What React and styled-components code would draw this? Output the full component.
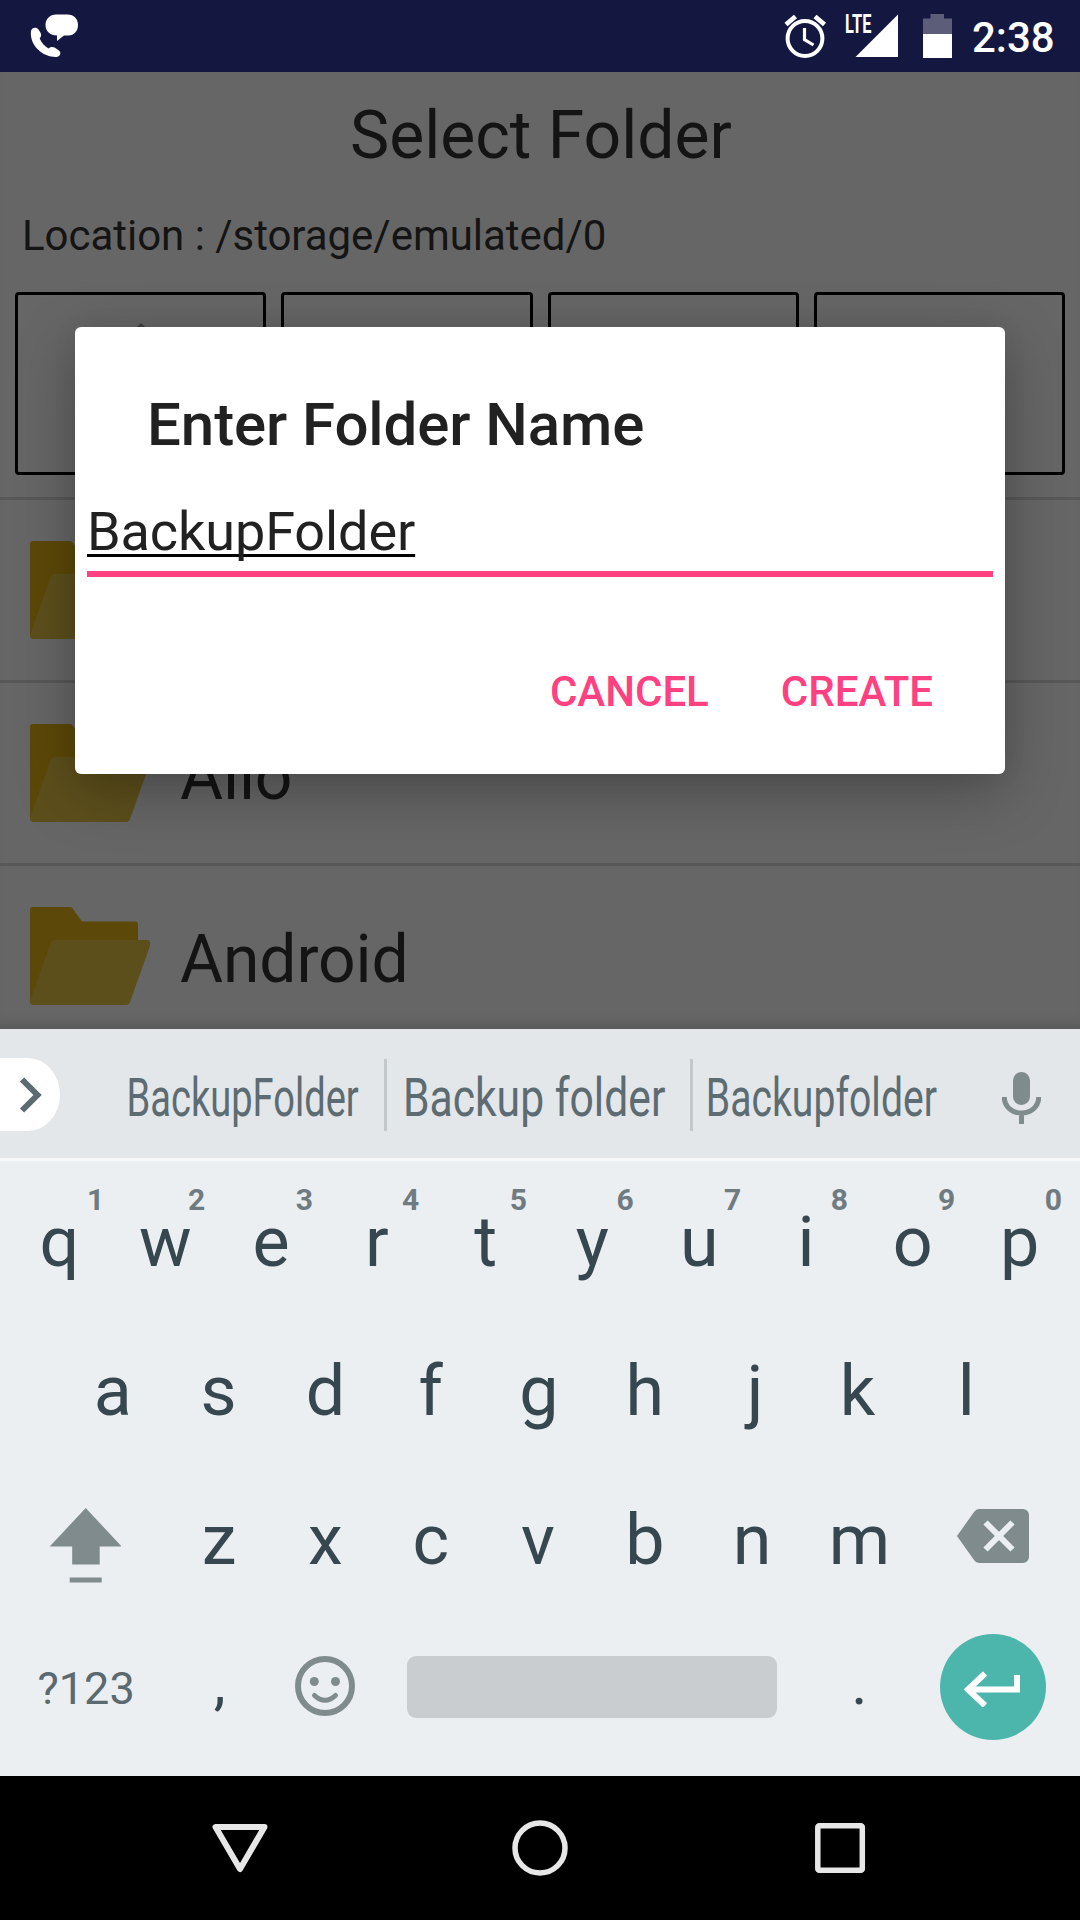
import React from "react";
import styled, { createGlobalStyle } from "styled-components";

const GlobalStyle = createGlobalStyle`
  body { margin: 0; background: #000; }
  * { box-sizing: border-box; }
`;

const Screen = styled.div`
  position: relative;
  display: flex;
  flex-direction: column;
  width: 1080px;
  height: 1920px;
  overflow: hidden;
  background: #666;
  font-family: Roboto, "Noto Sans", sans-serif;
`;

const StatusBar = styled.header`
  flex: none;
  display: flex;
  align-items: flex-start;
  justify-content: space-between;
  height: 72px;
  padding: 14px 25px 0 30px;
  background: #141840;
  color: #fff;
`;

const StatusIcons = styled.div`
  display: flex;
  align-items: flex-start;
`;

const Signal = styled.div`
  position: relative;
  width: 54px;
  height: 44px;
  margin-left: 18px;
`;

const NetworkLabel = styled.span`
  position: absolute;
  left: 0;
  top: 0;
  font-size: 26px;
  font-weight: 700;
  line-height: 20px;
  transform: scaleX(0.63);
  transform-origin: left;
`;

const BatteryIcon = styled.svg`
  margin-left: 24px;
`;

const Clock = styled.span`
  margin-left: 20px;
  width: 83px;
  font-size: 42px;
  font-weight: 500;
  line-height: 47px;
  white-space: nowrap;
`;

const Picker = styled.main`
  flex: none;
  display: flex;
  flex-direction: column;
  height: 957px;
  overflow: hidden;
  color: #141414;
`;

const PickerTitle = styled.h1`
  flex: none;
  margin: 0;
  padding-left: 2px;
  font-size: 66px;
  font-weight: 400;
  line-height: 127px;
  text-align: center;
`;

const Location = styled.div`
  flex: none;
  padding-left: 22px;
  font-size: 42px;
  letter-spacing: -0.03px;
  line-height: 73px;
`;

const ToolGrid = styled.div`
  flex: none;
  display: grid;
  grid-template-columns: repeat(4, 1fr);
  gap: 15px;
  padding: 20px 15px 22px;
`;

const ToolButton = styled.div`
  display: flex;
  justify-content: center;
  height: 183px;
  padding-top: 28px;
  border: 3px solid #000;
  border-radius: 4px;
`;

const FolderRow = styled.div`
  flex: none;
  display: flex;
  align-items: center;
  gap: 30px;
  height: 183px;
  padding-left: 30px;
  border-top: 3px solid #585858;
`;

const FolderName = styled.span`
  padding-top: 8px;
  font-size: 66px;
  letter-spacing: -0.1px;
  line-height: 76px;
`;

const Overlay = styled.div`
  position: absolute;
  left: 0;
  top: 72px;
  width: 1080px;
  height: 957px;
  display: flex;
  align-items: center;
  justify-content: center;
  overflow: hidden;
  box-shadow: inset 0 -14px 14px -12px rgba(0, 0, 0, 0.2);
`;

const Dialog = styled.section`
  display: flex;
  flex-direction: column;
  width: 930px;
  height: 447px;
  padding-top: 62px;
  border-radius: 6px;
  background: #fff;
  color: #212121;
  box-shadow: 0 18px 60px rgba(0, 0, 0, 0.27), 0 0 26px rgba(0, 0, 0, 0.06);
`;

const DialogTitle = styled.h2`
  margin: 0;
  padding-left: 72px;
  font-size: 60px;
  font-weight: 500;
  letter-spacing: -0.08px;
  line-height: 71px;
`;

const Field = styled.div`
  height: 78px;
  margin: 39px 12px 0;
  border-bottom: 6px solid #ff4081;
  font-size: 54px;
  letter-spacing: -0.1px;
  line-height: 65px;
`;

const Composing = styled.span`
  text-decoration: underline;
  text-decoration-color: #000;
  text-decoration-thickness: 3px;
  text-decoration-skip-ink: none;
  text-underline-offset: 4px;
`;

const DialogActions = styled.div`
  display: flex;
  justify-content: flex-end;
  gap: 72px;
  margin-top: 82px;
  padding-right: 72px;
`;

const DialogButton = styled.span`
  color: #ff4081;
  font-size: 42px;
  font-weight: 500;
  line-height: 66px;
`;

const Keyboard = styled.section`
  flex: none;
  display: flex;
  flex-direction: column;
  height: 747px;
  background: #ebeff2;
  color: #37474f;
`;

const SuggestionStrip = styled.div`
  flex: none;
  display: flex;
  align-items: center;
  height: 132px;
  padding-top: 2px;
  border-bottom: 3px solid #f6f8f9;
  background: #e3e7ea;
`;

const ExpandTab = styled.div`
  display: flex;
  align-items: center;
  width: 60px;
  height: 73px;
  margin-right: 42px;
  padding-left: 19px;
  border-radius: 0 32px 32px 0 / 0 36.5px 36.5px 0;
  background: #fff;
`;

const Suggestion = styled.div`
  flex: none;
  display: flex;
  justify-content: center;
  width: ${(p) => p.$width}px;
  padding: 6px ${(p) => p.$inset || 0}px 0 0;
  color: #5d6b72;
  font-size: 54px;
  line-height: 64px;
`;

const Condensed = styled.span`
  white-space: nowrap;
  transform: scaleX(${(p) => p.$scale});
`;

const Separator = styled.div`
  flex: none;
  width: 3px;
  height: 72px;
  background: #c3c8cb;
`;

const MicButton = styled.div`
  display: flex;
  margin: 6px 0 0 49px;
`;

const KeyRows = styled.div`
  display: flex;
  flex-direction: column;
  padding: 6px 7px 0 5px;
`;

const KeyRow = styled.div`
  display: flex;
  justify-content: center;
  height: 149px;
`;

const Key = styled.div`
  position: relative;
  display: flex;
  align-items: center;
  justify-content: center;
  width: ${(p) => 106.8 * (p.$span || 1)}px;
  padding-top: ${(p) => p.$drop || 0}px;
  padding-bottom: ${(p) => p.$lift || 0}px;
  font-size: ${(p) => p.$size || 70}px;
  text-indent: ${(p) => 2 * (p.$nudge || 0)}px;
  color: ${(p) => p.$color || "inherit"};
`;

const Hint = styled.sup`
  position: absolute;
  top: 15px;
  right: ${(p) => p.$right}px;
  color: #6f7b80;
  font-size: 30px;
  font-weight: 700;
  line-height: 35px;
  text-indent: 0;
`;

const SpaceBar = styled.div`
  width: 370px;
  height: 62px;
  border-radius: 9px;
  background: #c9cdd0;
`;

const EnterKey = styled.div`
  display: flex;
  align-items: center;
  justify-content: center;
  width: 106px;
  height: 106px;
  border-radius: 50%;
  background: #4db6ac;
`;

const NavBar = styled.nav`
  flex: none;
  display: flex;
  align-items: center;
  justify-content: center;
  gap: 240px;
  height: 144px;
  background: #000;
`;

const FolderIcon = () => (
  <svg width="120" height="98" viewBox="0 0 120 98">
    <path
      fill="#5c4808"
      d="M0 3a3 3 0 0 1 3-3H40q2 0 3 2l9 12.600H105q3 0 3 3V50L2 96Q0 96 0 94Z"
    />
    <path
      fill="#5d4f1c"
      d="M25 33H118q2 0 2 3v3L100 95q-1 3-4 3H3q-3 0-3-4L20 38q1-5 5-5Z"
    />
  </svg>
);

const PhoneChatIcon = () => (
  <svg width="49" height="44" viewBox="0 0 49 44" fill="#fff">
    <path d="M26 .5H37.500C44 .5 48 5 48 11s-4 10.500-9.500 10.500H34L27 27V21.500C20 21.500 15.500 17 15.500 11S20 .5 26 .5Z" />
    <path d="M1 17c.5-3.500 5.500-4.500 7.500-1.500l2 3.200c1 2 .8 3.500-.8 5.800 1.800 4.500 4.800 7.500 8.800 10 2.500-2 4.500-1.900 6.500-.8l3.600 2.500c3.400 2.500 1.400 6.300-2 6.800C13 43.500-.8 31.500 1 17Z" />
  </svg>
);

const AlarmIcon = () => (
  <svg width="43" height="46" viewBox="0 0 43 46" fill="none" stroke="#fff">
    <circle cx="21" cy="24.500" r="17.400" strokeWidth="4" />
    <path d="M2 10.500 11.500 2.500M31 2.500 40.500 10.500" strokeWidth="4.800" />
    <path d="M20.500 14V25.500L29.500 31" strokeWidth="3.200" />
  </svg>
);

// Each key: the letter and its optical offset in pixels.
const rows = {
  top: [["q", 1], ["w", 0], ["e", -1], ["r", -2], ["t", 0], ["y", 0], ["u", 0], ["i", 0], ["o", 0], ["p", 0]],
  home: [["a", 1], ["s", 0], ["d", 0], ["f", -1.5], ["g", 0], ["h", -1], ["j", 2.5], ["k", -2], ["l", 0]],
  bottom: [["z", 0.5], ["x", 0], ["c", -1.5], ["v", -1], ["b", -1], ["n", -0.5], ["m", 0]],
};

const hintRight = [7.5, 13.5, 12.5, 13, 12, 12, 11.5, 11.5, 11, 11];

const ICON = "#808b8e";

export default function App() {
  return (
    <Screen>
      <GlobalStyle />
      <StatusBar>
        <PhoneChatIcon />
        <StatusIcons>
          <AlarmIcon />
          <Signal>
            <svg width="54" height="44">
              <path d="M53 .5V43H10.500Z" fill="#fff" />
            </svg>
            <NetworkLabel>LTE</NetworkLabel>
          </Signal>
          <BatteryIcon width="29" height="44">
            <path d="M7.500 0H21V4.500H29V20H0V4.500H7.500Z" fill="#5b5d79" />
            <path d="M0 20H29V44H0Z" fill="#fff" />
          </BatteryIcon>
          <Clock>2:38</Clock>
        </StatusIcons>
      </StatusBar>

      <Picker>
        <PickerTitle>Select Folder</PickerTitle>
        <Location>Location : /storage/emulated/0</Location>
        <ToolGrid>
          <ToolButton>
            <svg width="90" height="90" fill="#3f3f3f">
              <path d="M45 0 85 40H60V90H30V40H5Z" />
            </svg>
          </ToolButton>
          <ToolButton />
          <ToolButton />
          <ToolButton />
        </ToolGrid>
        <FolderRow>
          <FolderIcon />
        </FolderRow>
        <FolderRow>
          <FolderIcon />
          <FolderName>Allo</FolderName>
        </FolderRow>
        <FolderRow>
          <FolderIcon />
          <FolderName>Android</FolderName>
        </FolderRow>
      </Picker>

      <Overlay>
        <Dialog>
          <DialogTitle>Enter Folder Name</DialogTitle>
          <Field>
            <Composing>BackupFolder</Composing>
          </Field>
          <DialogActions>
            <DialogButton>CANCEL</DialogButton>
            <DialogButton>CREATE</DialogButton>
          </DialogActions>
        </Dialog>
      </Overlay>

      <Keyboard>
        <SuggestionStrip>
          <ExpandTab>
            <svg width="24" height="36" fill="none" stroke="#5c6b71" strokeWidth="6">
              <path d="M3 2.500 18.500 18 3 33.500" />
            </svg>
          </ExpandTab>
          <Suggestion $width={282}>
            <Condensed $scale={0.705}>BackupFolder</Condensed>
          </Suggestion>
          <Separator />
          <Suggestion $width={303} $inset={9}>
            <Condensed $scale={0.79}>Backup folder</Condensed>
          </Suggestion>
          <Separator />
          <Suggestion $width={260} $inset={3}>
            <Condensed $scale={0.725}>Backupfolder</Condensed>
          </Suggestion>
          <MicButton>
            <svg width="39" height="52" fill={ICON}>
              <rect x="11" y="0" width="17" height="33" rx="8.500" />
              <path
                d="M2.300 25C2.300 34.500 10 41 19.500 41S36.700 34.500 36.700 25M19.500 41V52"
                fill="none"
                stroke={ICON}
                strokeWidth="5"
              />
            </svg>
          </MicButton>
        </SuggestionStrip>

        <KeyRows>
          <KeyRow>
            {rows.top.map(([letter, nudge], i) => (
              <Key key={letter} $nudge={nudge}>
                {letter}
                <Hint $right={hintRight[i]}>{(i + 1) % 10}</Hint>
              </Key>
            ))}
          </KeyRow>
          <KeyRow>
            {rows.home.map(([letter, nudge]) => (
              <Key key={letter} $nudge={nudge}>{letter}</Key>
            ))}
          </KeyRow>
          <KeyRow>
            <Key $span={1.5} $drop={11}>
              <svg width="72" height="76" viewBox="-0.7 0 72 76" fill={ICON}>
                <path d="M36 1 72 39.500H50V57.500H22.500V39.500H0ZM20 70.500H52V75.500H20Z" />
              </svg>
            </Key>
            {rows.bottom.map(([letter, nudge]) => (
              <Key key={letter} $nudge={nudge}>{letter}</Key>
            ))}
            <Key $span={1.5} $lift={7}>
              <svg width="72" height="54">
                <path
                  fill={ICON}
                  d="M22 0H66a6 6 0 0 1 6 6V48a6 6 0 0 1-6 6H22q-3 0-5-3L0 27 17 3q2-3 5-3Z"
                />
                <path d="M28.500 13.500 55.500 40.500M55.500 13.500 28.500 40.500" stroke="#ebeff2" strokeWidth="6" />
              </svg>
            </Key>
          </KeyRow>
          <KeyRow>
            <Key $span={1.5} $size={45} $color="#5b6a70" $nudge={1} $lift={1}>
              ?123
            </Key>
            <Key $size={60} $lift={12} $nudge={1}>,</Key>
            <Key $lift={5}>
              <svg width="60" height="60" fill={ICON}>
                <circle cx="30" cy="30" r="27" fill="none" stroke={ICON} strokeWidth="6" />
                <circle cx="19.300" cy="25.500" r="4.500" />
                <circle cx="40.500" cy="25.500" r="4.500" />
                <path
                  d="M19.500 39.500Q30 49 40.500 39.500"
                  fill="none"
                  stroke={ICON}
                  strokeWidth="5"
                  strokeLinecap="round"
                />
              </svg>
            </Key>
            <Key $span={4} $lift={3}>
              <SpaceBar />
            </Key>
            <Key $size={62} $lift={12}>.</Key>
            <Key $span={1.5} $lift={4}>
              <EnterKey>
                <svg width="60" height="40" fill="none" stroke="#fff" strokeWidth="6">
                  <path d="M54 8V22.500H6M22 6.500 5 22.500 22 38.500" />
                </svg>
              </EnterKey>
            </Key>
          </KeyRow>
        </KeyRows>
      </Keyboard>

      <NavBar>
        <svg width="60" height="60" fill="none" stroke="#e7e7e7" strokeWidth="6" strokeLinejoin="round">
          <path d="M5.500 9H54.500L30 51Z" />
        </svg>
        <svg width="60" height="60" fill="none" stroke="#e7e7e7" strokeWidth="5.500">
          <circle cx="30" cy="30" r="25" />
        </svg>
        <svg width="60" height="60" fill="none" stroke="#e7e7e7" strokeWidth="5.500">
          <rect x="7.800" y="7.800" width="44.500" height="44.500" rx="1.500" />
        </svg>
      </NavBar>
    </Screen>
  );
}
